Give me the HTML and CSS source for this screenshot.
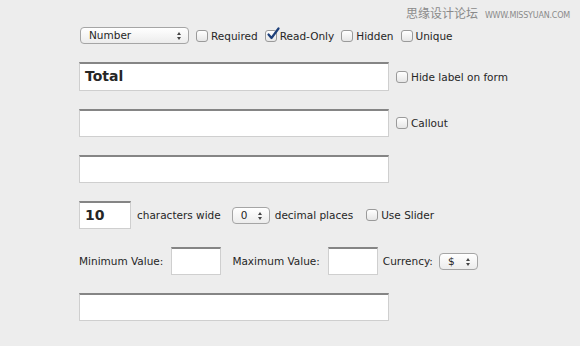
FILE: index.html
```html
<!DOCTYPE html>
<html>
<head>
  <link rel="stylesheet" href="styles.css">
</head>
<body>
  <div class="watermark"><span class="wm-cn">思缘设计论坛</span><span class="wm-en">WWW.MISSYUAN.COM</span></div>

  <div class="form">
    <div class="row type-row">
      <div class="select select-type">Number<span class="arrows"></span></div>
      <label class="check"><span class="box"></span>Required</label>
      <label class="check"><span class="box checked"><svg viewBox="0 0 14 14" width="14" height="14"><path d="M2.5 7.5 L5.5 11 L12.5 1.5" fill="none" stroke="#1d3f7a" stroke-width="2.2" stroke-linecap="round" stroke-linejoin="round"/></svg></span>Read-Only</label>
      <label class="check"><span class="box"></span>Hidden</label>
      <label class="check"><span class="box"></span>Unique</label>
    </div>

    <div class="row field-row">
      <div class="text-input wide first bold">Total</div>
      <label class="check"><span class="box"></span>Hide label on form</label>
    </div>

    <div class="row field-row">
      <div class="text-input wide"></div>
      <label class="check"><span class="box"></span>Callout</label>
    </div>

    <div class="row field-row">
      <div class="text-input wide"></div>
    </div>

    <div class="row size-row">
      <div class="text-input small bold">10</div>
      <span class="lbl">characters wide</span>
      <div class="select select-num">0<span class="arrows"></span></div>
      <span class="lbl">decimal places</span>
      <label class="check slider"><span class="box"></span>Use Slider</label>
    </div>

    <div class="row value-row">
      <span class="lbl">Minimum Value:</span>
      <div class="text-input tiny"></div>
      <span class="lbl">Maximum Value:</span>
      <div class="text-input tiny"></div>
      <span class="lbl">Currency:</span>
      <div class="select select-cur">$<span class="arrows"></span></div>
    </div>

    <div class="row field-row">
      <div class="text-input wide"></div>
    </div>
  </div>
</body>
</html>
```

FILE: styles.css
```css
:root {
  --bg: #ededed;
  --text: #262626;
  --font: 'DejaVu Sans', 'Liberation Sans', sans-serif;
}

body {
  margin: 0;
  background: var(--bg);
  font-family: var(--font);
  font-size: 10.5px;
  color: var(--text);
  width: 580px;
  height: 346px;
  position: relative;
  overflow: hidden;
}

.watermark {
  position: absolute;
  top: 4px;
  right: 10px;
  color: #8a8a8a;
  white-space: nowrap;
}

.wm-cn {
  font-family: 'Noto Sans CJK SC', sans-serif;
  font-size: 12px;
  margin-right: 7px;
}

.wm-en {
  font-size: 8px;
  letter-spacing: -0.2px;
}

.form {
  padding: 27px 0 0 79px;
}

.row {
  display: flex;
  align-items: center;
  margin-bottom: 18px;
}

.type-row {
  height: 17px;
}

.type-row .check {
  margin-left: 7px;
}

/* checkboxes */
.check {
  display: inline-flex;
  align-items: center;
  margin-left: 8px;
  white-space: nowrap;
}

.box {
  position: relative;
  width: 10px;
  height: 10px;
  margin-right: 3px;
  border: 1px solid #9a9a9a;
  border-radius: 3px;
  background: linear-gradient(#fff, #e6e6e6);
}

.box svg {
  position: absolute;
  left: 0;
  top: -4px;
}

/* selects */
.select {
  position: relative;
  height: 15px;
  line-height: 15px;
  border: 1px solid #a5a5a5;
  border-radius: 4px;
  background: linear-gradient(#fff, #ececec);
  box-sizing: content-box;
  padding-left: 8px;
}

.select .arrows {
  position: absolute;
  right: 6px;
  top: 4px;
  width: 5px;
  height: 8px;
}

.select .arrows::before,
.select .arrows::after {
  content: '';
  position: absolute;
  left: 0;
  border-left: 2.5px solid transparent;
  border-right: 2.5px solid transparent;
}

.select .arrows::before {
  top: 0;
  border-bottom: 3px solid #444;
}

.select .arrows::after {
  bottom: 0;
  border-top: 3px solid #444;
}

.select-type {
  width: 99px;
  margin-left: 1px;
}

.select-num {
  width: 28px;
  margin-left: 11px;
}

.select-cur {
  width: 29px;
  margin-left: 6px;
}

/* text inputs */
.text-input {
  box-sizing: border-box;
  background: #fff;
  border: 1px solid #cfcfcf;
  border-top: 2px solid #858585;
  padding-left: 5px;
  font-size: 14px;
  line-height: 24px;
}

.bold {
  font-weight: bold;
}

.wide {
  width: 310px;
  height: 28px;
}

.wide.first {
  height: 29px;
}

.field-row .check {
  margin-left: 7px;
}

.small {
  width: 52px;
  height: 28px;
}

.tiny {
  width: 50px;
  height: 28px;
}

.lbl {
  white-space: nowrap;
}

.size-row .lbl {
  margin-left: 6px;
}

.size-row .select + .lbl {
  margin-left: 5px;
}

.check.slider {
  margin-left: 13px;
}

.value-row .tiny {
  margin-left: 8px;
}

.value-row .tiny + .lbl {
  margin-left: 11px;
}

.value-row .tiny + .lbl + .tiny + .lbl {
  margin-left: 5px;
}
```
